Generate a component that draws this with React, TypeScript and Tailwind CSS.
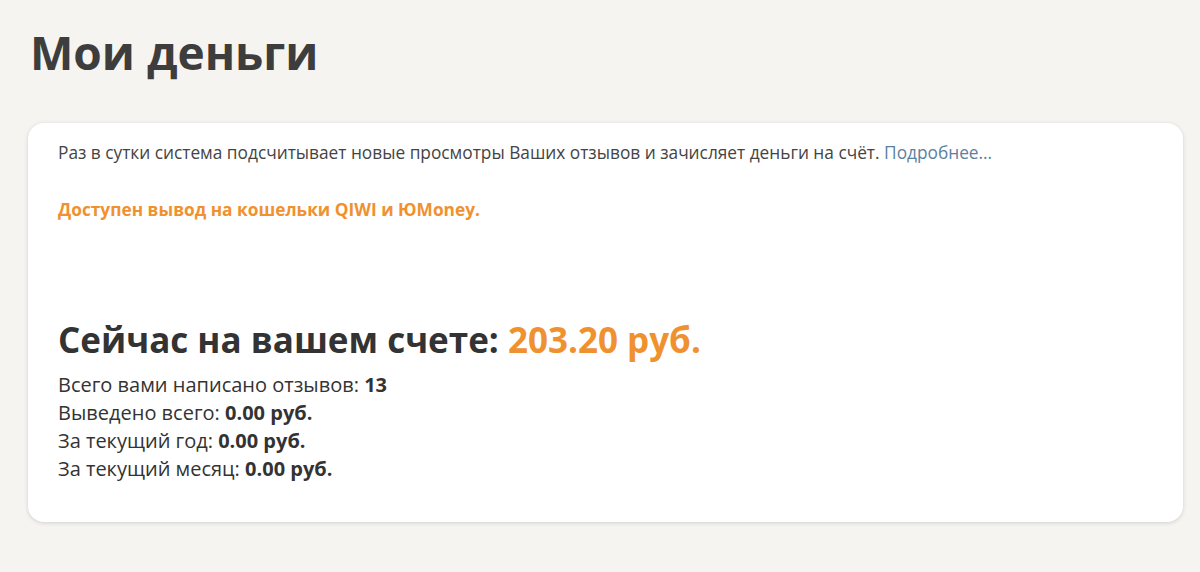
import React from "react";

export default function App() {
  return (
    <div className="min-h-[572px] w-[1200px] bg-[#f5f4f0] px-[28px] pt-[22px] pb-[50px]" style={{ fontFamily: '"Open Sans", "Noto Sans", sans-serif' }}>
      <h1 className="ml-[2px] text-[46px] font-bold leading-[60px] text-[#3d3d3d]">Мои деньги</h1>
      <div className="mt-[41px] w-[1155px] rounded-[16px] bg-white px-[30px] pt-[18px] pb-[39px] shadow-[0_1px_4px_rgba(0,0,0,0.15)]">
        <p className="text-[17.3px] leading-[24px] text-[#444]">
          Раз в сутки система подсчитывает новые просмотры Ваших отзывов и зачисляет деньги на счёт.{" "}
          <a className="text-[#5b7f9f]">Подробнее...</a>
        </p>
        <p className="mt-[33px] text-[17.3px] font-bold leading-[24px] text-[#f0912f]">Доступен вывод на кошельки QIWI и ЮMoney.</p>
        <div className="mt-[96px] text-[35px] font-bold leading-[44px] text-[#333]">
          Сейчас на вашем счете: <span className="text-[#f0912f]">203.20 руб.</span>
        </div>
        <div className="mt-[9px] text-[20px] leading-[28px] text-[#333]">
          <div>Всего вами написано отзывов: <b>13</b></div>
          <div>Выведено всего: <b>0.00 руб.</b></div>
          <div>За текущий год: <b>0.00 руб.</b></div>
          <div>За текущий месяц: <b>0.00 руб.</b></div>
        </div>
      </div>
    </div>
  );
}
